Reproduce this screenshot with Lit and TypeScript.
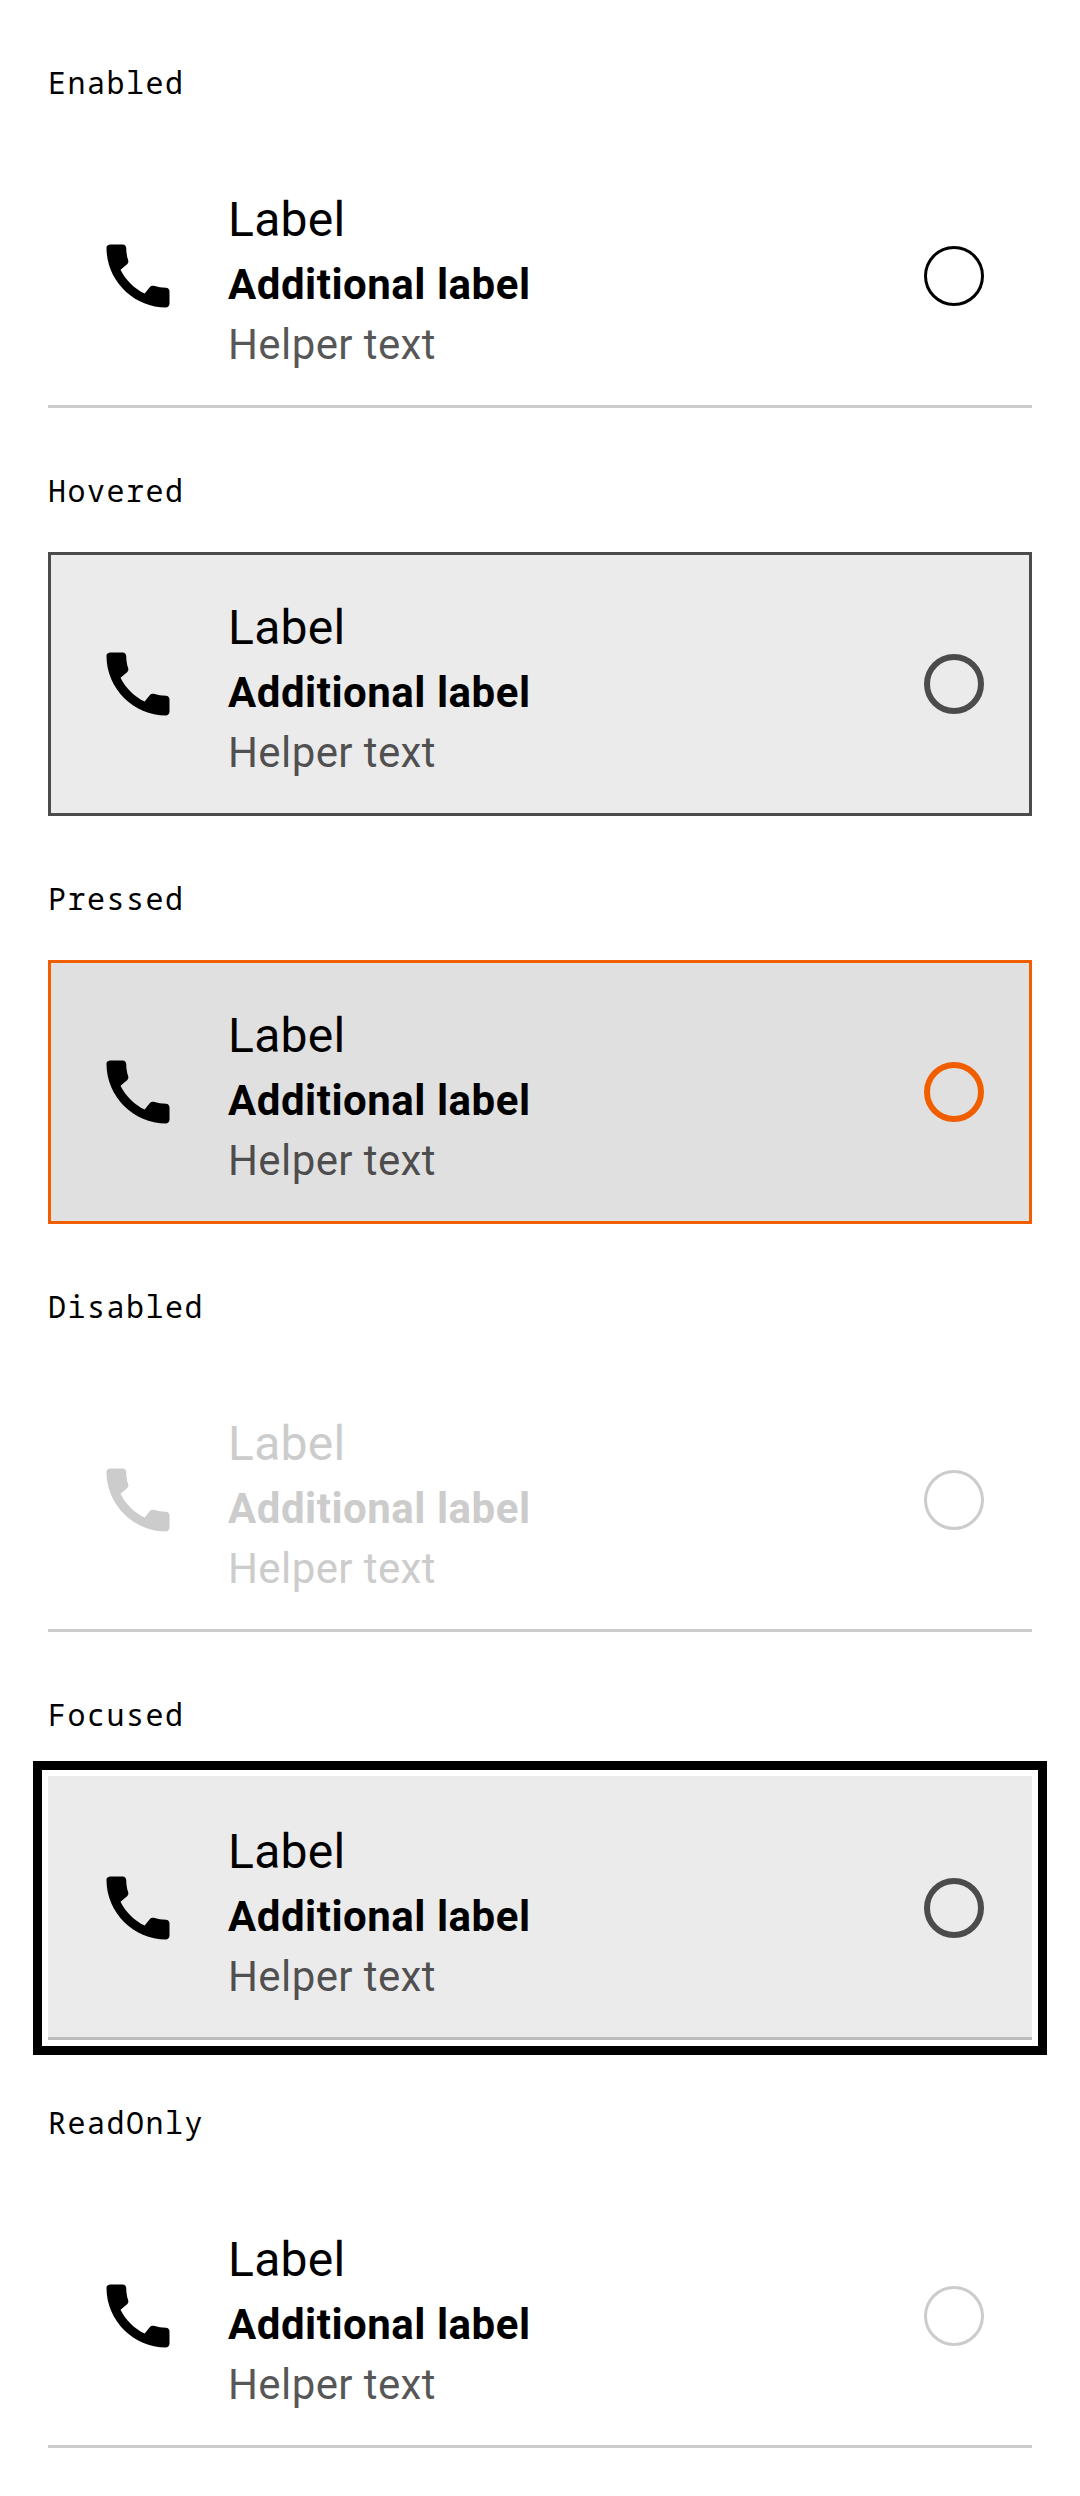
import { LitElement, html, css } from "lit";
import { customElement, property } from "lit/decorators.js";

type State = "enabled" | "hovered" | "pressed" | "disabled" | "focused" | "readonly";

@customElement("radio-item")
class RadioItem extends LitElement {
  @property() state: State = "enabled";

  static styles = css`
    :host { display: block; }
    .item {
      box-sizing: border-box;
      height: 264px;
      display: flex;
      align-items: center;
      padding: 0 48px;
      color: #000;
      font-family: Roboto, sans-serif;
      box-shadow: inset 0 -3px rgba(0, 0, 0, 0.2);
    }
    .icon { display: block; width: 84px; height: 84px; fill: currentColor; margin-right: 48px; }
    .texts { flex: 1; align-self: flex-start; padding-top: 41px; display: flex; flex-direction: column; }
    .label { font-size: 48px; line-height: 70px; letter-spacing: 0.3px; }
    .additional { font-size: 42px; line-height: 60px; font-weight: 700; letter-spacing: 0.52px; }
    .helper { font-size: 42px; line-height: 60px; letter-spacing: 0.4px; color: rgba(0, 0, 0, 0.68); }
    .radio { box-sizing: border-box; width: 60px; height: 60px; border: 3px solid #000; border-radius: 50%; }
    .hovered, .focused { background: #ebebeb; }
    .hovered { box-shadow: inset 0 0 0 3px #4b4b4b; }
    .hovered .radio, .focused .radio { border: 6px solid #4b4b4b; }
    .pressed { background: #e0e0e0; box-shadow: inset 0 0 0 3px #f15e00; }
    .pressed .radio { border: 6px solid #f15e00; }
    .disabled, .disabled .helper { color: #ccc; }
    .disabled .radio, .readonly .radio { border-color: #ccc; }
    .focused { box-shadow: inset 0 -3px rgba(0, 0, 0, 0.2), 0 0 0 6px #fff, 0 0 0 15px #000; }
  `;

  render() {
    return html`
      <div class="item ${this.state}">
        <svg class="icon" viewBox="0 0 24 24">
          <path d="M20.01 15.38c-1.23 0-2.42-.2-3.53-.56-.35-.12-.74-.03-1.01.24l-1.57 1.97c-2.83-1.35-5.48-3.9-6.89-6.83l1.95-1.66c.27-.28.35-.67.24-1.02-.37-1.11-.56-2.3-.56-3.53 0-.54-.45-.99-.99-.99H4.19C3.65 3 3 3.24 3 3.99 3 13.28 10.73 21 20.01 21c.71 0 .99-.63.99-1.18v-3.45c0-.54-.45-.99-.99-.99z"></path>
        </svg>
        <div class="texts">
          <span class="label">Label</span>
          <span class="additional">Additional label</span>
          <span class="helper">Helper text</span>
        </div>
        <span class="radio"></span>
      </div>
    `;
  }
}

@customElement("app-root")
class AppRoot extends LitElement {
  static styles = css`
    :host { display: block; height: 2496px; background: #fff; overflow: hidden; }
    .caption {
      box-sizing: border-box;
      height: 144px;
      padding: 59px 48px 0;
      font: 30px/48px "Noto Sans Mono", "DejaVu Sans Mono", monospace;
      letter-spacing: 1.5px;
      color: #000;
    }
    .row { display: block; margin: 0 48px; }
  `;

  render() {
    const states = ["Enabled", "Hovered", "Pressed", "Disabled", "Focused", "ReadOnly"];
    return states.map(
      (s) => html`
        <div class="caption">${s}</div>
        <radio-item class="row" .state=${s.toLowerCase() as State}></radio-item>
      `
    );
  }
}
